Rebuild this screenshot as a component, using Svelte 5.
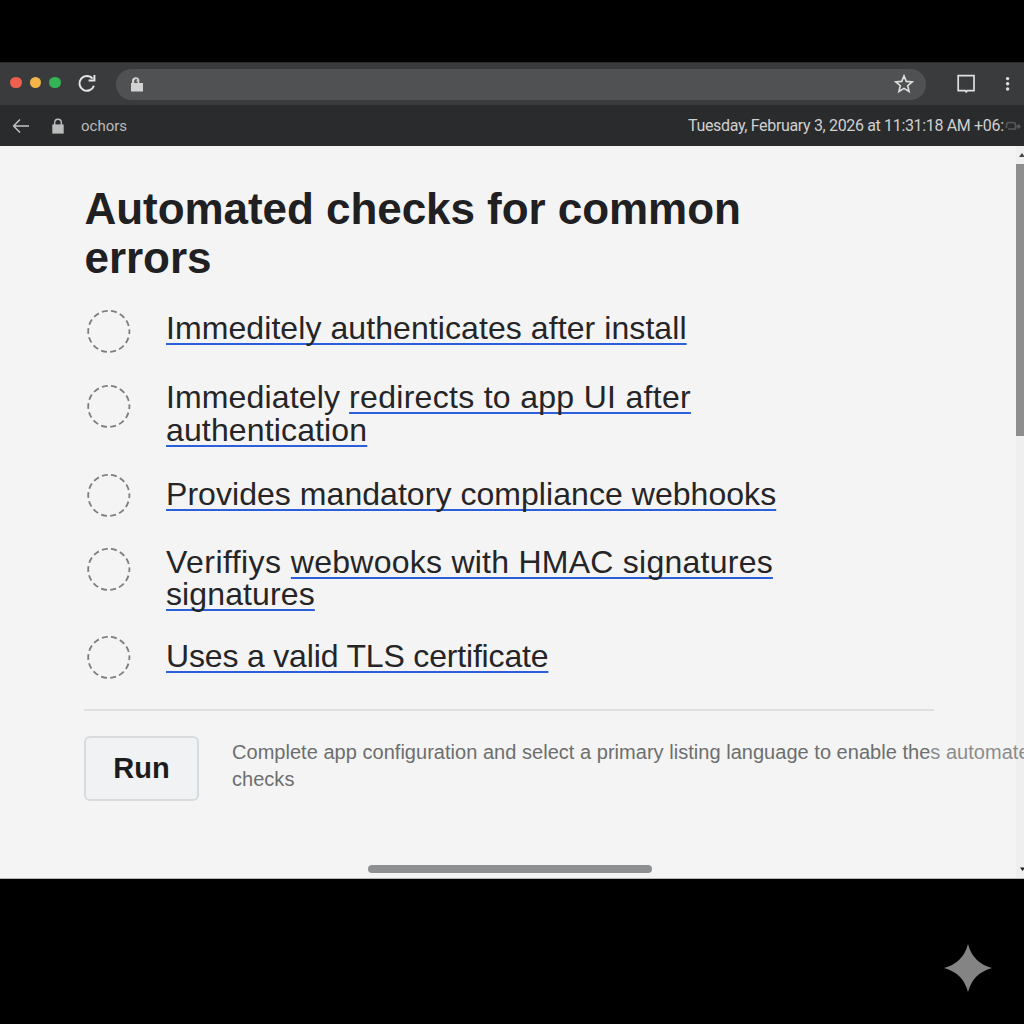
<script lang="ts">
  type Check = {
    plain?: string;
    link: string;
    rest?: string;
  };

  const checks: Check[] = [
    { link: "Immeditely authenticates after install" },
    { plain: "Immediately", link: "redirects to app UI after", rest: "authentication" },
    { link: "Provides mandatory compliance webhooks" },
    { plain: "Veriffiys", link: "webwooks with HMAC signatures", rest: "signatures" },
    { link: "Uses a valid TLS certificate" },
  ];
</script>

<div class="screen">
  <div class="browser">
    <header class="toolbar">
      <div class="lights">
        <span class="light red"></span>
        <span class="light yellow"></span>
        <span class="light green"></span>
      </div>
      <svg class="reload" viewBox="0 0 20 20" width="20" height="20" aria-hidden="true">
        <path d="M15.6 4.7A7.4 7.4 0 1 0 16.9 11.7" fill="none" stroke="#e6e6e6" stroke-width="2" />
        <path d="M17.4 0.9V6.5H11.6" fill="none" stroke="#e6e6e6" stroke-width="2" />
      </svg>
      <div class="address">
        <svg viewBox="0 0 14 16" width="14" height="16" aria-hidden="true">
          <path d="M1 7H2V5A3.8 3.8 0 0 1 9.3 3.6V7H13V15.4H1Z" fill="#d2d2d2" />
          <path d="M4.2 7V5A1.8 1.8 0 0 1 7.4 3.8L5.9 5.4H7.6V7Z" fill="#555657" />
        </svg>
        <svg viewBox="0 0 20 20" width="20" height="20" aria-hidden="true">
          <path d="M10 1.9L12.3 7.4L18.2 7.9L13.7 11.7L15.1 17.5L10 14.4L4.9 17.5L6.3 11.7L1.8 7.9L7.7 7.4Z" fill="none" stroke="#dedede" stroke-width="1.6" />
        </svg>
      </div>
      <svg class="panel-icon" viewBox="0 0 20 20" width="20" height="20" aria-hidden="true">
        <path d="M2.2 1.6H18V16.6H11.2L10.2 17.8L9.2 16.6H2.2Z" fill="none" stroke="#e0e0e0" stroke-width="1.7" />
      </svg>
      <svg class="dots" viewBox="0 0 6 16" width="6" height="16" aria-hidden="true">
        <circle cx="2.6" cy="2.6" r="1.7" />
        <circle cx="2.6" cy="7.8" r="1.7" />
        <circle cx="2.6" cy="13" r="1.7" />
      </svg>
    </header>

    <div class="subbar">
      <svg viewBox="0 0 18 16" width="18" height="16" aria-hidden="true">
        <path d="M17 8H2M8 1.5L1.6 8L8 14.5" fill="none" stroke="#c4c4c4" stroke-width="1.5" />
      </svg>
      <svg class="lock" viewBox="0 0 12 16" width="12" height="16" aria-hidden="true">
        <path d="M2.7 7V4.6A3.3 3.3 0 0 1 9.3 4.6V7" fill="none" stroke="#bdbdbd" stroke-width="1.4" />
        <rect x="0.3" y="6.4" width="11.4" height="9.2" fill="#bdbdbd" />
      </svg>
      <span class="host">ochors</span>
      <time>Tuesday, February 3, 2026 at 11:31:18 AM +06:</time>
      <svg class="faded" viewBox="0 0 16 10" width="16" height="10" aria-hidden="true">
        <path d="M1.5 7V4Q1.5 1.5 4 1.5H8Q10.5 1.5 10.5 4V8H3M11 5.5H14M12.8 3.5L15 5.5L12.8 7.5" fill="none" stroke="#58595c" stroke-width="1.6" />
      </svg>
    </div>

    <main>
      <div class="content">
        <h1>Automated checks for common<br />errors</h1>

        <ul>
          {#each checks as check (check.link)}
            <li>
              <svg class="status" viewBox="0 0 44 44" width="44" height="44" aria-hidden="true">
                <circle cx="21.8" cy="21.4" r="20.6" />
              </svg>
              <div class="label">
                {#if check.plain}<span>{check.plain}{" "}</span>{/if}<a href="#top">{check.link}</a>
                {#if check.rest}<br /><a class="rest" href="#top">{check.rest}</a>{/if}
              </div>
            </li>
          {/each}
        </ul>

        <footer>
          <button type="button">Run</button>
          <p>
            Complete app configuration and select a primary listing language to enable the<span class="fade">s automated</span><br />checks
          </p>
        </footer>
      </div>

      <div class="scrollbar">
        <svg viewBox="0 0 8 16" width="8" height="16" aria-hidden="true"><path d="M3 11L6 7L9 11Z" fill="#444" /></svg>
        <div class="thumb"></div>
        <svg class="down" viewBox="0 0 8 16" width="8" height="16" aria-hidden="true"><path d="M4 5.5H9L6.5 9Z" fill="#222" /></svg>
      </div>
      <div class="home-bar"></div>
    </main>
  </div>

  <svg class="sparkle" viewBox="0 0 48 48" width="48" height="48" aria-hidden="true">
    <path d="M24 0Q29 19 48 24Q29 29 24 48Q19 29 0 24Q19 19 24 0Z" fill="#848484" />
  </svg>
</div>

<style>
  :global(body) {
    margin: 0;
    background: #000;
  }

  .screen {
    position: relative;
    box-sizing: border-box;
    width: 1024px;
    height: 1024px;
    padding-top: 62px;
    overflow: hidden;
    background: #000;
    font-family: "Liberation Sans", Arial, sans-serif;
  }

  .browser {
    display: flex;
    flex-direction: column;
    height: 817px;
  }

  .toolbar {
    display: flex;
    align-items: center;
    box-sizing: border-box;
    height: 43px;
    padding: 0 13px 0 10px;
    background: #3a3b3d;
    border-top: 1px solid #2c2d2e;
  }

  .lights {
    display: flex;
    gap: 8px;
    width: 67px;
    padding-bottom: 3px;
  }

  .light {
    width: 11.5px;
    height: 11.5px;
    border-radius: 50%;
  }

  .red {
    background: #f0604f;
  }

  .yellow {
    background: #f3b54a;
  }

  .green {
    background: #34b457;
  }

  .address {
    display: flex;
    flex: none;
    align-items: center;
    justify-content: space-between;
    box-sizing: border-box;
    width: 810px;
    height: 31px;
    margin-left: 18.5px;
    padding: 0 12px 0 14px;
    border-radius: 16px;
    background: #505152;
  }

  .panel-icon {
    flex: none;
    margin-left: 30px;
  }

  .dots {
    margin-left: auto;
    flex: none;
    fill: #e0e0e0;
  }

  .subbar {
    display: flex;
    align-items: center;
    height: 41px;
    padding-left: 12px;
    background: #2a2b2d;
    color: #d0d0d0;
    font-family: Roboto, sans-serif;
    font-size: 16px;
    white-space: nowrap;
  }

  .subbar > * {
    flex: none;
  }

  .lock {
    margin-left: 22px;
  }

  .host {
    width: 607px;
    margin-left: 17px;
    font-size: 15px;
    color: #bcbcbc;
  }

  time {
    width: 316px;
    letter-spacing: -0.34px;
  }

  .faded {
    margin-left: 1px;
  }

  main {
    position: relative;
    display: flex;
    flex: 1;
    background: #f4f4f4;
    border-bottom: 1px solid #b5b7b6;
  }

  .content {
    position: relative;
    z-index: 1;
    box-sizing: border-box;
    width: 1016px;
    padding: 39px 0 0 84px;
  }

  h1 {
    margin: 0 0 28px;
    padding-left: 0.5px;
    font-size: 44px;
    line-height: 48.5px;
    font-weight: 700;
    letter-spacing: -0.05px;
    color: #202022;
    white-space: nowrap;
  }

  ul {
    display: grid;
    grid-template-rows: 71px 93px 72px 90px 73px;
    box-sizing: border-box;
    width: 850px;
    margin: 0;
    padding: 0;
    list-style: none;
    border-bottom: 2px solid #dfe0e1;
  }

  li {
    display: flex;
    gap: 38px;
  }

  .status {
    flex: none;
    margin-left: 3px;
    width: 44px;
  }

  /* 14 dashes round a circumference of 129.4 */
  .status circle {
    fill: none;
    stroke: #7d7e80;
    stroke-width: 1.8;
    stroke-dasharray: 5.84 3.4;
    stroke-dashoffset: 2.9;
  }

  .label {
    margin-left: -3px;
    font-size: 32px;
    line-height: 33px;
    letter-spacing: 0.05px;
    color: #252527;
    white-space: nowrap;
  }

  li:nth-child(1) .label {
    margin-top: 2px;
    letter-spacing: 0.08px;
  }

  li:nth-child(2) .status {
    margin-top: 4px;
  }

  li:nth-child(2) .label {
    letter-spacing: 0.14px;
  }

  li:nth-child(2) a:not(.rest) {
    letter-spacing: 0.3px;
  }

  li:nth-child(3) .label,
  li:nth-child(5) .label {
    margin-top: 4px;
  }

  li:nth-child(4) .status {
    margin-top: 2px;
  }

  li:nth-child(4) .label {
    line-height: 32px;
    letter-spacing: 0.25px;
  }

  li:nth-child(4) span {
    letter-spacing: 0.45px;
  }

  li:nth-child(4) .rest {
    letter-spacing: 0.12px;
  }

  li:nth-child(5) .label {
    letter-spacing: -0.17px;
  }

  .label a {
    color: inherit;
    text-decoration: underline #2b5fdc 2px;
    text-decoration-skip-ink: none;
    text-underline-offset: 4px;
  }

  footer {
    display: flex;
    align-items: flex-start;
    padding-top: 25px;
  }

  button {
    flex: none;
    box-sizing: border-box;
    width: 115px;
    height: 65px;
    border: 2px solid #d8dbdd;
    border-radius: 6px;
    background: #f1f2f3;
    color: #1c1c1e;
    font: 700 29px "Liberation Sans", Arial, sans-serif;
  }

  p {
    margin: 3px 0 0 33px;
    font-size: 20px;
    line-height: 27px;
    letter-spacing: 0.03px;
    color: #6d6e6e;
    white-space: nowrap;
  }

  .fade {
    color: #8b8c8c;
  }

  .scrollbar {
    display: flex;
    flex-direction: column;
    width: 8px;
    background: #efefef;
  }

  .thumb {
    height: 272px;
    margin-top: 2px;
    background: #8e8e8e;
  }

  .down {
    margin-top: auto;
  }

  .home-bar {
    position: absolute;
    bottom: 5px;
    left: 368px;
    width: 284px;
    height: 8px;
    border-radius: 4px;
    background: #8e8f90;
  }

  .sparkle {
    position: absolute;
    left: 944px;
    top: 944px;
  }
</style>
